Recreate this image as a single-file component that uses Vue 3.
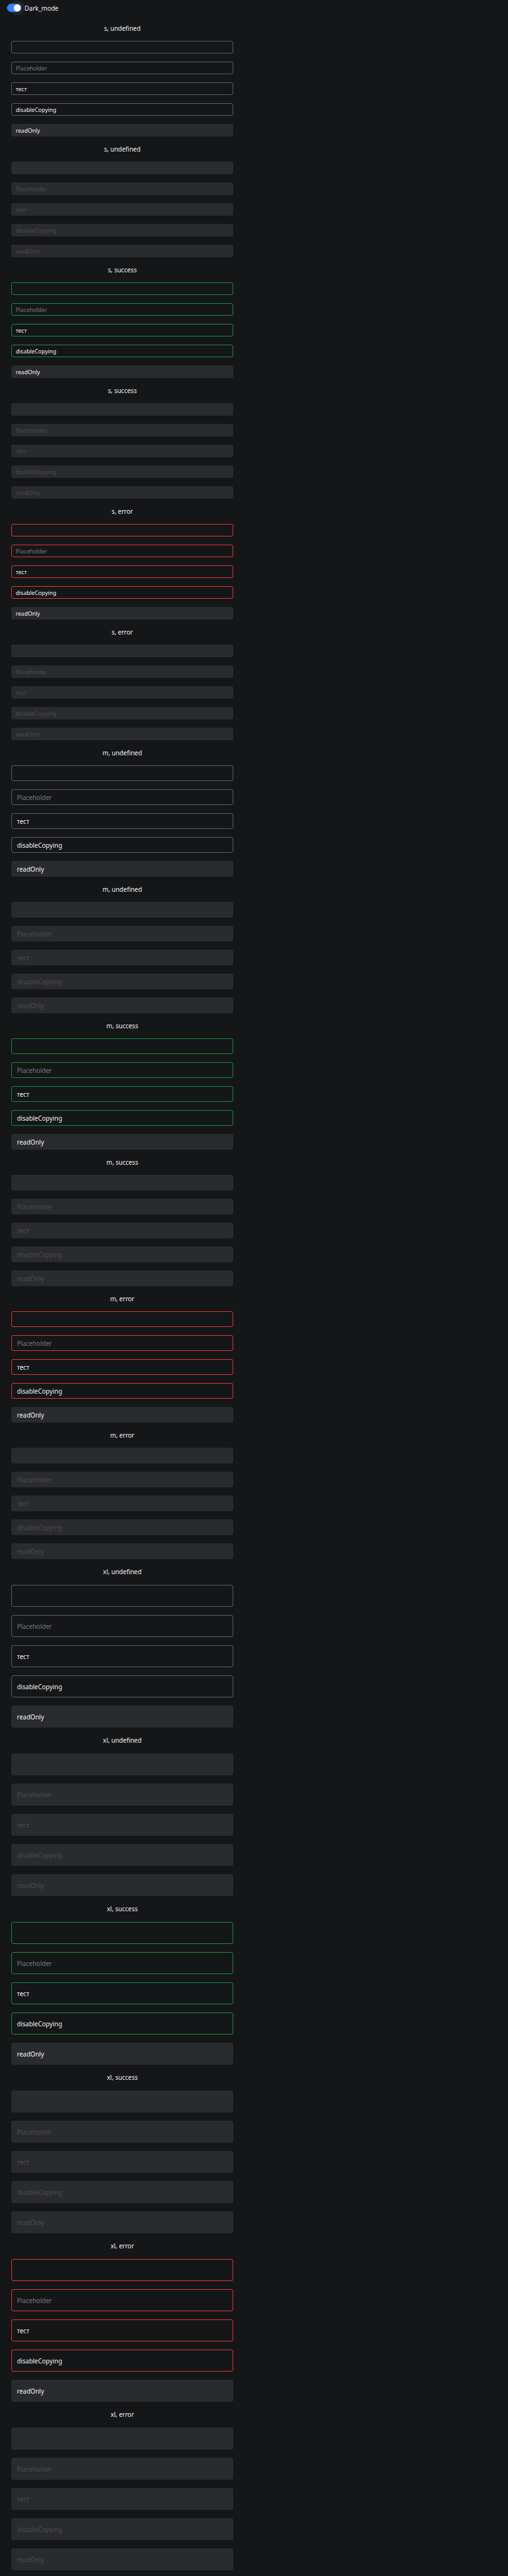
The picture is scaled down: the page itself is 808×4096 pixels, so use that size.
<script setup>
import { ref } from 'vue'

const dark = ref(true)

const fields = [
  { key: 'empty', label: 'Empty' },
  { key: 'placeholder', label: 'Placeholder', placeholder: 'Placeholder' },
  { key: 'text', label: 'Text', value: 'тест' },
  { key: 'copying', label: 'Copying disabled', value: 'disableCopying', noCopy: true },
  { key: 'readonly', label: 'Read only', value: 'readOnly', readonly: true }
]

const groups = []
for (const size of ['s', 'm', 'xl']) {
  for (const status of ['undefined', 'success', 'error']) {
    for (const disabled of [false, true]) {
      groups.push({ id: `${size}-${status}-${disabled ? 'off' : 'on'}`, size, status, disabled })
    }
  }
}

function onCopy(event, field) {
  if (field.noCopy) event.preventDefault()
}
</script>

<template>
  <div class="page" :class="{ light: !dark }">
    <header class="bar">
      <label class="toggle">
        <input v-model="dark" class="toggle-input" type="checkbox" role="switch" />
        <span class="toggle-text">Dark_mode</span>
      </label>
    </header>
    <main class="column">
      <section v-for="g in groups" :key="g.id" :class="['group', g.size, g.status]" :aria-labelledby="g.id">
        <h2 :id="g.id" class="title">{{ g.size }}, {{ g.status }}</h2>
        <div class="fields">
          <input
            v-for="f in fields"
            :key="f.key"
            class="field"
            type="text"
            :aria-label="f.label"
            :value="f.value"
            :placeholder="f.placeholder"
            :readonly="f.readonly"
            :disabled="g.disabled"
            @copy="onCopy($event, f)"
          />
        </div>
      </section>
    </main>
  </div>
</template>

<style>
html,
body {
  margin: 0;
  background: #151618;
}
</style>

<style scoped>
.page {
  --bg: #151618;
  --text: #f2f2f3;
  --fill: #2a2b2e;
  --line: #5d5e67;
  --hint: #777982;
  --off: #4b4c52;
  box-sizing: border-box;
  min-height: 100vh;
  padding-bottom: 8px;
  background: var(--bg);
  color: var(--text);
  font-family: "Noto Sans", sans-serif;
  font-size: 10px;
}

.page.light {
  --bg: #ffffff;
  --text: #212124;
  --fill: #f2f3f5;
  --line: #8a96a8;
  --hint: #6c7789;
  --off: #b8bfca;
}

.bar {
  display: flex;
  align-items: center;
  height: 25px;
  padding-left: 11px;
}

.toggle {
  display: flex;
  align-items: center;
  gap: 5px;
  cursor: pointer;
}

.toggle-input {
  appearance: none;
  display: flex;
  align-items: center;
  box-sizing: border-box;
  width: 23px;
  height: 13px;
  margin: 0;
  padding: 0 1px;
  border-radius: 7px;
  background: var(--line);
  cursor: pointer;
}

.toggle-input::before {
  content: "";
  width: 11px;
  height: 11px;
  border-radius: 50%;
  background: #ffffff;
  box-shadow: 0 0 0 6px rgba(138, 138, 150, 0.13);
}

.toggle-input:checked {
  justify-content: flex-end;
  background: #3381ff;
}

.toggle-text {
  line-height: 14px;
}

.column {
  max-width: 353px;
  margin: 0 18px;
}

.title {
  margin: 0;
  font-size: 10px;
  font-weight: 400;
  line-height: 40px;
  text-align: center;
}

.fields {
  display: flex;
  flex-direction: column;
  gap: 13px;
}

.field {
  box-sizing: border-box;
  width: 100%;
  height: 25px;
  margin: 0;
  padding: 0 8px;
  border: 1px solid var(--line);
  border-radius: 3px;
  outline: none;
  background: transparent;
  color: var(--text);
  font-family: inherit;
  font-size: 10px;
}

.s .field {
  height: 20px;
  padding: 0 6px;
  font-size: 9px;
}

.xl .field {
  height: 35px;
}

.xl .title {
  line-height: 41px;
}

.success .field {
  border-color: #178f40;
}

.error .field {
  border-color: #e63737;
}

.field::placeholder {
  color: var(--hint);
  opacity: 1;
}

.field:read-only,
.field:disabled {
  border-color: var(--fill);
  background: var(--fill);
}

.field:disabled,
.field:disabled::placeholder {
  color: var(--off);
}
</style>
